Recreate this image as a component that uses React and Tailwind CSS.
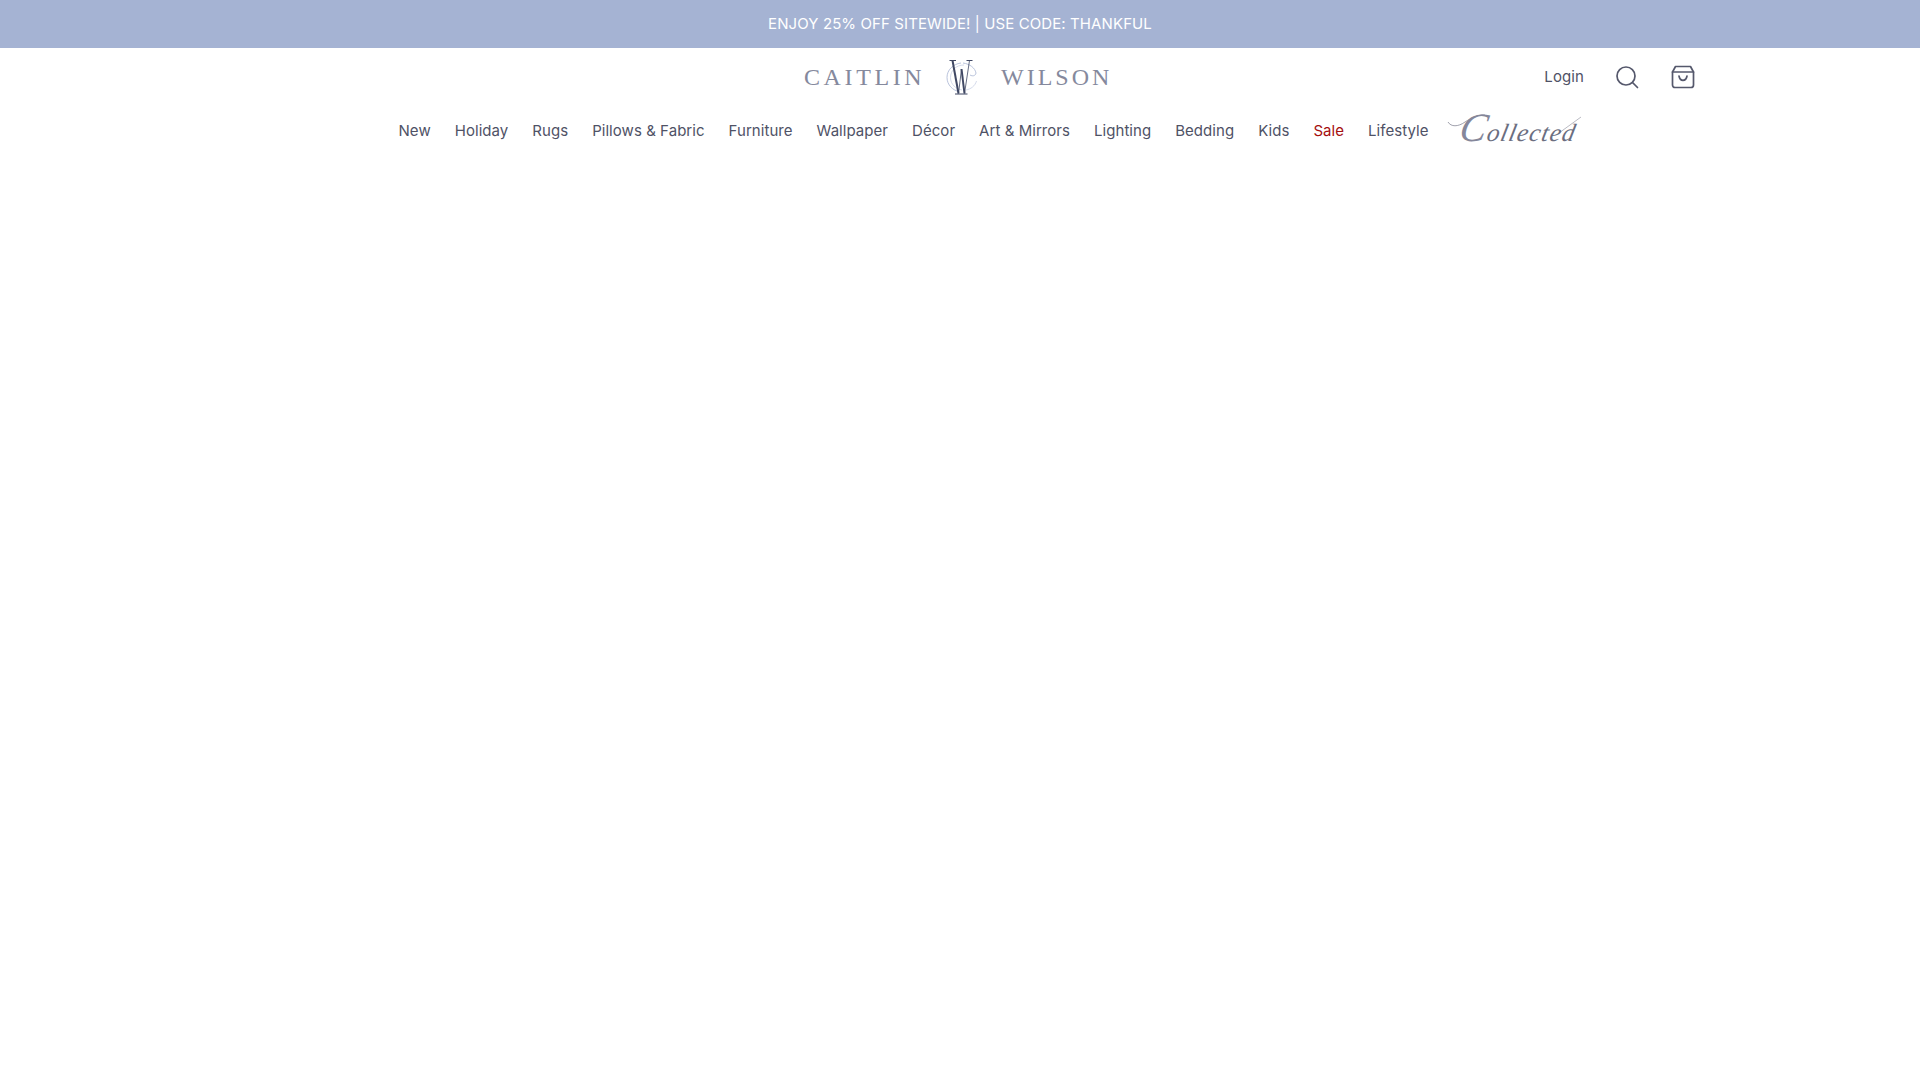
import React from 'react';

const navItems = ['New', 'Holiday', 'Rugs', 'Pillows & Fabric', 'Furniture', 'Wallpaper', 'Décor', 'Art & Mirrors', 'Lighting', 'Bedding', 'Kids', 'Sale', 'Lifestyle'];

const Monogram = () => (
    <svg width="34" height="36" viewBox="0 0 34 36" fill="none" className="shrink-0">
        <path d="M17 4C9 5 3 11 3 18.500C3 26 9 31.500 15 32.500" stroke="#b9c3dc" strokeWidth="1" />
        <path d="M20 6C12 6 6.500 11.500 6.500 18.500C6.500 25.500 12 30 18 31" stroke="#c9d1e4" strokeWidth="0.8" />
        <path d="M19 4C26 5 31 9 32 14C31.500 17 28.500 17.500 26 16" stroke="#b9c3dc" strokeWidth="1" />
        <path d="M22 31C27 30 31 27 32.500 22" stroke="#c9d1e4" strokeWidth="0.8" />
        <path d="M8.500 1.500L14.500 34.500" stroke="#3f4763" strokeWidth="2" />
        <path d="M14.500 34.500L17.500 10" stroke="#3f4763" strokeWidth="0.8" />
        <path d="M17.500 10L20.500 34.500" stroke="#3f4763" strokeWidth="2" />
        <path d="M20.500 34.500L25.500 1.500" stroke="#3f4763" strokeWidth="0.8" />
        <path d="M5.500 1.500H12M22.500 1.500H28.500M11 35H23.500" stroke="#3f4763" strokeWidth="1" />
    </svg>
);

const SearchIcon = () => (
    <svg width="24" height="24" viewBox="0 0 24 24" fill="none" stroke="#55586c" strokeWidth="1.700">
        <circle cx="11" cy="11" r="9" />
        <path d="M17.500 17.500L22.500 22.500" strokeLinecap="round" />
    </svg>
);

const BagIcon = () => (
    <svg width="24" height="24" viewBox="0 0 24 24" fill="none" stroke="#55586c" strokeWidth="1.700" strokeLinecap="round" strokeLinejoin="round">
        <path d="M4.500 1.500H19.500L22.500 7V20C22.500 21.500 21.500 22.500 20 22.500H4C2.500 22.500 1.500 21.500 1.500 20V7Z" />
        <path d="M1.500 7H22.500" />
        <path d="M8 11C8.500 14 10 15.300 12 15.300C14 15.300 15.500 14 16 11" />
    </svg>
);

// script wordmark: no script font here, so serif italic stretched plus drawn flourishes
const CollectedMark = () => (
    <div className="relative w-[134px] h-[36px] -ml-[5px] shrink-0">
        <svg width="134" height="36" viewBox="0 0 134 36" fill="none" className="absolute inset-0">
            <path d="M1 9C4 14 11 14 18 9C24 5 33 1 38 2" stroke="#77798a" strokeWidth="0.7" />
            <path d="M112 20C119 15 127 9 134 4" stroke="#8a8c9a" strokeWidth="0.6" />
        </svg>
        <span className="absolute left-[13px] -top-[1px] font-['Liberation_Serif',serif] italic text-[25px] leading-[32px] tracking-[1.200px] text-[#6b6e80] -skew-x-12 whitespace-nowrap">
            <span className="text-[40px] leading-[32px] text-[#85879a]">C</span>ollected
        </span>
    </div>
);

export default function App() {
    return (
        <div className="min-h-[1080px] bg-white font-['Inter',sans-serif]">
            <div className="h-12 flex items-center justify-center bg-[#a5b3d3] text-white text-[15px] tracking-[0.1px]">
                ENJOY 25% OFF SITEWIDE! | USE CODE: THANKFUL
            </div>

            <header>
                <div className="h-[58px] grid grid-cols-[1fr_auto_1fr] items-center">
                    <div />
                    <div className="flex items-center font-['Liberation_Serif',serif] text-[24px] leading-none text-[#85899d]">
                        <span className="w-[117px] tracking-[3.600px]">CAITLIN</span>
                        <span className="mx-[23px]"><Monogram /></span>
                        <span className="w-[115px] tracking-[3px]">WILSON</span>
                    </div>
                    <div className="flex items-center justify-end pr-[225px] text-[15px] text-[#4f5266]">
                        <span className="tracking-[0.1px]">Login</span>
                        <span className="ml-[31px]"><SearchIcon /></span>
                        <span className="ml-[32px]"><BagIcon /></span>
                    </div>
                </div>

                <nav className="h-[50px] flex items-center justify-center gap-6 pl-[60px] text-[15px] text-[#4f5266] tracking-[0.05px]">
                    {navItems.map((item) => (
                        <span key={item} className={item === 'Sale' ? 'text-[#a50f0f]' : ''}>{item}</span>
                    ))}
                    <CollectedMark />
                </nav>
            </header>
        </div>
    );
}
